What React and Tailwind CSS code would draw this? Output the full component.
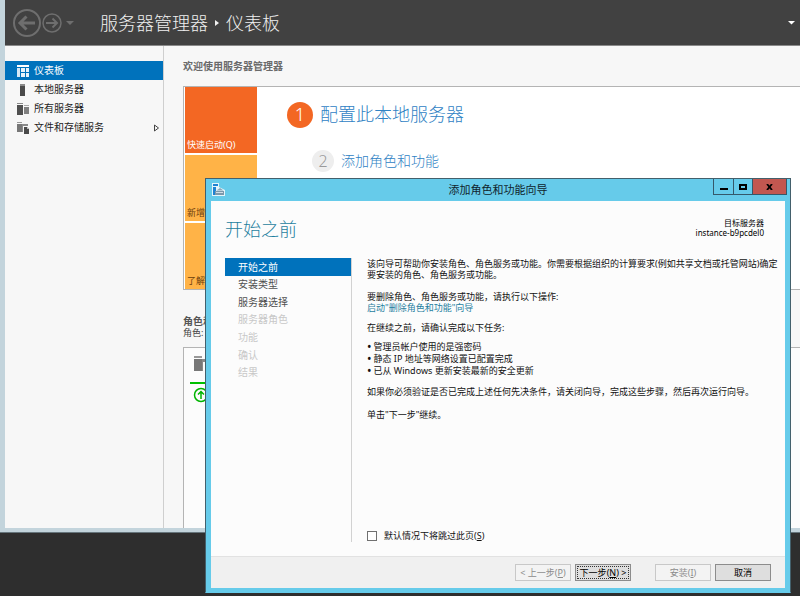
import { useState } from 'react';

const NAV_ITEMS = [
    { id: 'dashboard', label: '仪表板', Icon: DashboardIcon },
    { id: 'local', label: '本地服务器', Icon: ServerIcon },
    { id: 'all', label: '所有服务器', Icon: ServersIcon },
    { id: 'storage', label: '文件和存储服务', Icon: StorageIcon, expandable: true },
];

const STEPS = [
    { label: '开始之前', state: 'current' },
    { label: '安装类型', state: 'open' },
    { label: '服务器选择', state: 'open' },
    { label: '服务器角色', state: 'locked' },
    { label: '功能', state: 'locked' },
    { label: '确认', state: 'locked' },
    { label: '结果', state: 'locked' },
];

const STEP_STYLES = {
    current: 'bg-[#0072bc] text-white',
    open: 'text-[#505050]',
    locked: 'text-[#c8c8c8]',
};

const REQUIREMENTS = [
    '管理员帐户使用的是强密码',
    '静态 IP 地址等网络设置已配置完成',
    '已从 Windows 更新安装最新的安全更新',
];

// Icons
function DashboardIcon() {
    return (
        <svg className="h-3 w-3" viewBox="0 0 12 12" shapeRendering="crispEdges">
            <path d="M0 0h12v2H0z" fill="#fff" />
            <path d="M0 3h3v9H0z" fill="#d5e8f5" />
            <path d="M4 3h4v4H4zM9 3h3v4H9zM4 8h4v4H4zM9 8h3v4H9z" fill="#e8f3fa" />
        </svg>
    );
}

function ServerIcon() {
    return (
        <svg className="h-3 w-3" viewBox="0 0 12 12" shapeRendering="crispEdges">
            <path d="M3 0h5v2H3z" fill="#8a8a8a" />
            <path d="M3 2h5v10H3z" fill="#4a4a4a" />
        </svg>
    );
}

function ServersIcon() {
    return (
        <svg className="h-3 w-3" viewBox="0 0 12 12" shapeRendering="crispEdges">
            <path d="M0 0h6v1H0z" fill="#8a8a8a" />
            <path d="M0 2h6v10H0z" fill="#505050" />
            <path d="M7 2h5v1H7z" fill="#aaa" />
            <path d="M7 4h5v7H7z" fill="#808080" />
        </svg>
    );
}

function StorageIcon({ className = 'h-3 w-3' }) {
    return (
        <svg className={className} viewBox="0 0 12 12" shapeRendering="crispEdges">
            <path d="M0 0h5v1H0z" fill="#999" />
            <path d="M0 2h5v8H0z" fill="#777" />
            <path d="M5 2h6v2H5zM5 4h1v6H5z" fill="#8a8a8a" />
            <path d="M7 5h3l2 2v5H7z" fill="#4a4a4a" />
            <path d="M10 5v2h2z" fill="#bbb" />
        </svg>
    );
}

function WizardIcon() {
    return (
        <svg className="h-[13px] w-[13px]" viewBox="0 0 13 13">
            <path d="M0 0h7v4l6 3v6H0z" fill="#e4f5fb" />
            <path d="M1 1h5v2H1zM1 4h3v8H1z" fill="#1e82d2" />
            <path d="M3 8h9v4H3z" fill="#7c98ac" />
            <path d="M4.500 7.500L8 5l3.500 2.500z" fill="#8aa6b8" />
            <path d="M4 9.500h7" stroke="#e8f0f4" strokeWidth=".8" />
        </svg>
    );
}

function TopBar() {
    return (
        <header className="flex h-[46px] shrink-0 items-center border-b border-[#8a8a8a] bg-[#414141] pl-2 text-[#6e6e6e]">
            <button aria-label="后退">
                <svg className="h-7 w-7" viewBox="0 0 28 28" fill="none" stroke="currentColor">
                    <circle cx="14" cy="14" r="13" strokeWidth="2" />
                    <path d="M22 14H7M13.500 7.500L7 14l6.500 6.500" strokeWidth="3" />
                </svg>
            </button>
            <button aria-label="前进" className="ml-px">
                <svg className="h-5 w-5" viewBox="0 0 20 20" fill="none" stroke="currentColor">
                    <circle cx="10" cy="10" r="9" strokeWidth="1.500" />
                    <path d="M4 10h11M10.500 5.500L15 10l-4.500 4.500" strokeWidth="2" />
                </svg>
            </button>
            <button aria-label="历史记录" className="ml-1">
                <svg className="h-1 w-2" viewBox="0 0 8 4" fill="currentColor"><path d="M0 0h8L4 4z" /></svg>
            </button>
            <h1 className="ml-[26px] flex items-center pt-px text-[18px] font-light text-[#f0f0f0]">
                服务器管理器
                <svg className="mx-[7px] h-[6px] w-1" viewBox="0 0 4 6" fill="currentColor"><path d="M0 0l4 3-4 3z" /></svg>
                仪表板
            </h1>
            <button aria-label="更多" className="mr-1 ml-auto text-white">
                <svg className="h-1 w-2" viewBox="0 0 8 4" fill="currentColor"><path d="M0 0h7L3.500 3.500z" /></svg>
            </button>
        </header>
    );
}

function SideNav() {
    return (
        <nav className="w-[159px] shrink-0 border-r border-[#cfcfcf] pt-[15px]">
            {NAV_ITEMS.map(({ id, label, Icon, expandable }) => (
                <a
                    key={id}
                    href={`#${id}`}
                    className={`flex h-[19px] items-center pr-1 pl-3 text-[10px] ${
                        id === 'dashboard' ? 'bg-[#0072bc] text-white' : 'text-[#1e1e1e]'
                    }`}
                >
                    <Icon />
                    <span className="ml-[5px]">{label}</span>
                    {expandable && (
                        <svg className="ml-auto h-2 w-[5px]" viewBox="0 0 5 8" fill="none" stroke="#444">
                            <path d="M.5 1v6l4-3z" />
                        </svg>
                    )}
                </a>
            ))}
        </nav>
    );
}

function Dashboard() {
    return (
        <main className="flex min-w-0 flex-1 flex-col overflow-hidden pl-[19px]">
            <h2 className="mt-3 text-[10px] leading-4 font-bold text-[#6a6a6a]">欢迎使用服务器管理器</h2>
            <section className="mt-3 flex h-[204px] shrink-0 border border-r-0 border-[#b4b4b4] bg-white">
                <div className="flex w-[73px] flex-col gap-[2px] pl-px text-[9px] leading-3">
                    <button className="flex flex-1 items-end bg-[#f36723] p-[2px] text-white">快速启动(Q)</button>
                    <button className="flex flex-1 items-end bg-[#ffb347] p-[2px] text-[#6b3d0c]">新增功能(W)</button>
                    <button className="flex flex-1 items-end bg-[#ffb347] p-[2px] text-[#6b3d0c]">了解详细信息(L)</button>
                </div>
                <div className="ml-[30px] flex flex-col pt-[14px] text-[#2f82c4]">
                    <a href="#configure" className="flex items-center gap-[7px] text-[18px] font-light">
                        <span className="flex h-[26px] w-[26px] items-center justify-center rounded-full bg-[#f36723] text-white">1</span>
                        配置此本地服务器
                    </a>
                    <a href="#roles" className="mt-[22px] ml-[25px] flex items-center gap-[7px] text-[14px] leading-5 font-light">
                        <span className="flex h-[22px] w-[22px] items-center justify-center rounded-full bg-[#eee] text-[16px] text-[#999]">2</span>
                        添加角色和功能
                    </a>
                </div>
            </section>
            <h2 className="mt-[25px] text-[10px] leading-3 font-bold text-[#555]">角色和服务器组</h2>
            <p className="text-[9px] leading-3 text-[#444]">角色: 1</p>
            <section className="mt-2 flex-1 border border-r-0 border-b-0 border-[#b4b4b4] bg-[#fcfcfc] pt-2 pl-[10px]">
                <StorageIcon className="h-[18px] w-[18px]" />
                <div className="mt-2 -ml-1 h-[2px] w-24 bg-[#00c000]" />
                <svg className="mt-[3px] -ml-px h-4 w-4" viewBox="0 0 16 16" fill="none" stroke="#00b400">
                    <circle cx="8" cy="8" r="6.500" strokeWidth="1.500" />
                    <path d="M8 12V5M5 7.500l3-3 3 3" strokeWidth="1.500" />
                </svg>
            </section>
        </main>
    );
}

function TitleBar() {
    return (
        <div className="relative flex h-[22px] shrink-0 items-center justify-center text-[11px] text-[#10242c]">
            <span className="absolute top-1 left-px">
                <WizardIcon />
            </span>
            <h2>添加角色和功能向导</h2>
            <div className="absolute top-0 right-[-2px] flex h-4 border border-t-0 border-[#35586a] text-black">
                <button aria-label="最小化" className="flex w-5 items-end justify-center border-r border-[#35586a] pb-1">
                    <span className="h-[2px] w-2 bg-black" />
                </button>
                <button aria-label="最大化" className="flex w-[18px] items-center justify-center">
                    <span className="h-[6px] w-2 border-2 border-black" />
                </button>
                <button aria-label="关闭" className="flex w-[34px] items-center justify-center border-l border-[#35586a] bg-[#c25750]">
                    <svg className="h-[6px] w-[7px]" viewBox="0 0 7 6" stroke="#000" strokeWidth="1.800"><path d="M1 0l5 6M6 0L1 6" /></svg>
                </button>
            </div>
        </div>
    );
}

function WizardButton({ label, hotkey, after = '', disabled, focused }) {
    return (
        <button
            disabled={disabled}
            className={`flex h-[17px] w-14 items-center justify-center border p-px text-[9px] ${
                disabled ? 'border-[#c8c8c8] bg-[#f3f3f3] text-[#8c8c8c]' : 'border-[#8c8c8c] bg-[#dedede] text-black'
            }`}
        >
            <span
                className={`flex h-full w-full items-center justify-center whitespace-pre ${
                    focused ? 'border border-dotted border-[#333]' : ''
                }`}
            >
                {label}
                {hotkey && <>(<u>{hotkey}</u>)</>}
                {after}
            </span>
        </button>
    );
}

function Wizard() {
    const [skip, setSkip] = useState(false);

    return (
        <div
            role="dialog"
            aria-label="添加角色和功能向导"
            className="absolute top-[178px] right-[9px] bottom-[3px] left-[205px] flex flex-col border border-[#43606c] border-b-[#66cbea] bg-[#66cbea] px-[5px] pb-1"
        >
            <TitleBar />
            <div className="flex min-h-0 flex-1 flex-col bg-[#fcfcfc]">
                <div className="flex justify-between pt-[14px] pr-[21px] pl-[14px]">
                    <h3 className="text-[18px] leading-7 font-light text-[#1f7f9f]">开始之前</h3>
                    <p className="pt-[3px] text-right text-[8px] leading-[10px] text-black">
                        目标服务器
                        <br />
                        instance-b9pcdel0
                    </p>
                </div>
                <div className="mt-[15px] mb-[14px] flex min-h-0 flex-1 pl-[14px]">
                    <div className="w-[127px] shrink-0 border-r border-[#d2d2d2]">
                        <ol className="grid h-[123px] auto-rows-fr text-[10px] leading-3">
                            {STEPS.map((step) => (
                                <li key={step.label} className={`flex items-center pl-[13px] ${STEP_STYLES[step.state]}`}>
                                    {step.label}
                                </li>
                            ))}
                        </ol>
                    </div>
                    <div className="flex min-w-0 flex-1 flex-col pl-[15px] text-[9px] leading-[11px] text-[#111]">
                        <p>
                            该向导可帮助你安装角色、角色服务或功能。你需要根据组织的计算要求(例如共享文档或托管网站)确定要安装的角色、角色服务或功能。
                        </p>
                        <p className="mt-[11px]">要删除角色、角色服务或功能，请执行以下操作:</p>
                        <a href="#remove" className="text-[#1f7f9f]">启动"删除角色和功能"向导</a>
                        <p className="mt-[9px]">在继续之前，请确认完成以下任务:</p>
                        <ul className="mt-2 leading-3">
                            {REQUIREMENTS.map((text) => (
                                <li key={text} className="flex items-center gap-[2px]">
                                    <span className="text-[12px] leading-3">•</span>
                                    {text}
                                </li>
                            ))}
                        </ul>
                        <p className="mt-[9px]">如果你必须验证是否已完成上述任何先决条件，请关闭向导，完成这些步骤，然后再次运行向导。</p>
                        <p className="mt-3">单击"下一步"继续。</p>
                        <label className="mt-auto flex items-center gap-[7px] pb-px">
                            <input
                                type="checkbox"
                                checked={skip}
                                onChange={(e) => setSkip(e.target.checked)}
                                className="h-[10px] w-[10px] appearance-none border border-[#707070] bg-white checked:bg-[#0072bc]"
                            />
                            <span>默认情况下将跳过此页(<u>S</u>)</span>
                        </label>
                    </div>
                </div>
                <div className="flex h-8 shrink-0 items-center justify-end border-t border-[#e2e2e2] bg-[#f0f0f0] pr-[14px]">
                    <WizardButton label="< 上一步" hotkey="P" disabled />
                    <span className="w-1" />
                    <WizardButton label="下一步" hotkey="N" after=" >" focused />
                    <span className="w-6" />
                    <WizardButton label="安装" hotkey="I" disabled />
                    <span className="w-1" />
                    <WizardButton label="取消" />
                </div>
            </div>
        </div>
    );
}

export default function App() {
    return (
        <div
            lang="zh-CN"
            className="relative flex h-screen flex-col overflow-hidden bg-[#2e2e2e] pb-[63px] font-['Noto_Sans','Noto_Sans_CJK_SC',sans-serif]"
        >
            <div className="flex min-h-0 flex-1 flex-col border-b border-[#66757c] bg-[#c3d4dc] pb-1 pl-[5px]">
                <TopBar />
                <div className="flex min-h-0 flex-1 bg-[#f7f7f7]">
                    <SideNav />
                    <Dashboard />
                </div>
            </div>
            <Wizard />
        </div>
    );
}
